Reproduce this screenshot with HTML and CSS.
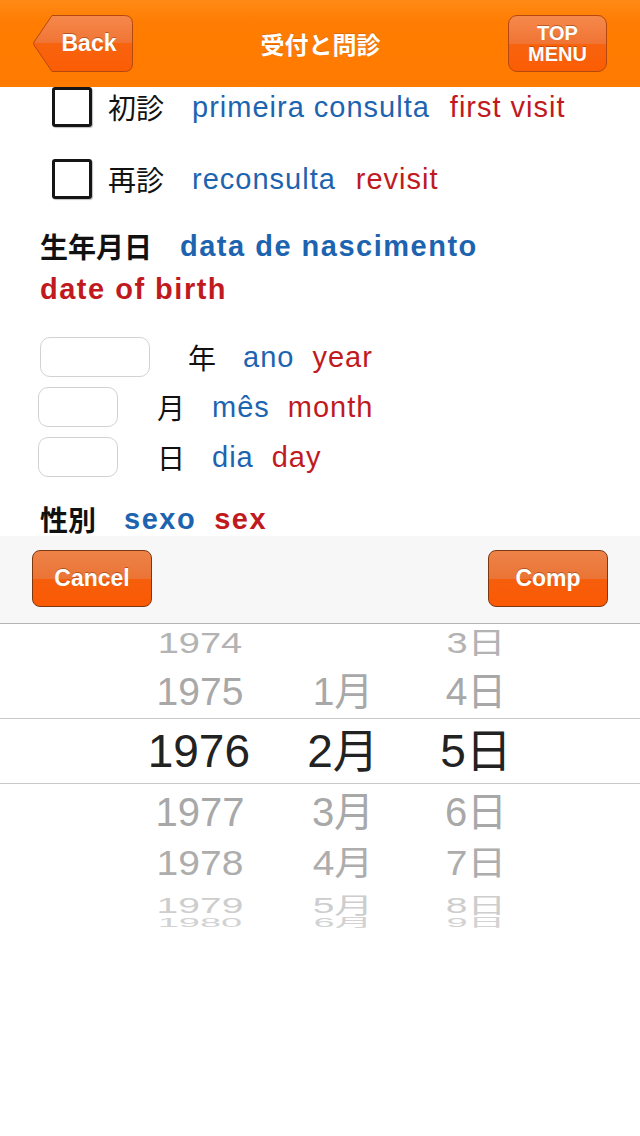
FILE: index.html
```html
<!Doctype html>
<html>
    <head>
        <title>受付と問診</title>
        <link rel="stylesheet" href="styles.css">
    </head>
    <body>
        <header class="topbar">
            <a class="back-btn">
                <svg class="back-shape" width="100" height="57" viewBox="0 0 100 57">
                    <defs>
                        <linearGradient id="gloss" x1="0" y1="0" x2="0" y2="1">
                            <stop offset="0" stop-color="#f5894c"/>
                            <stop offset="0.5" stop-color="#f07434"/>
                            <stop offset="0.5" stop-color="#f8630e"/>
                            <stop offset="1" stop-color="#fb5d04"/>
                        </linearGradient>
                    </defs>
                    <path d="M19 0.5 H91.5 Q99.5 0.5 99.5 8.5 V48.5 Q99.5 56.5 91.5 56.5 H19 L1 30 Q0 28.5 1 27 Z" fill="url(#gloss)" stroke="#b4480e" stroke-width="1"/>
                </svg>
                <span>Back</span>
            </a>
            <h1 class="title">受付と問診</h1>
            <a class="menu-btn">TOP<br>MENU</a>
        </header>

        <main class="form">
            <div class="check-row">
                <span class="box"></span>
                <span class="ja">初診</span>
                <span class="pt">primeira consulta</span>
                <span class="en">first visit</span>
            </div>
            <div class="check-row second">
                <span class="box"></span>
                <span class="ja">再診</span>
                <span class="pt">reconsulta</span>
                <span class="en">revisit</span>
            </div>

            <div class="heading">
                <span class="ja">生年月日</span>
                <span class="pt">data de nascimento</span>
            </div>
            <div class="heading sub">
                <span class="en">date of birth</span>
            </div>

            <div class="date-row year">
                <span class="field"></span>
                <span class="ja">年</span>
                <span class="pt">ano</span>
                <span class="en">year</span>
            </div>
            <div class="date-row">
                <span class="field"></span>
                <span class="ja">月</span>
                <span class="pt">mês</span>
                <span class="en">month</span>
            </div>
            <div class="date-row">
                <span class="field"></span>
                <span class="ja">日</span>
                <span class="pt">dia</span>
                <span class="en">day</span>
            </div>

            <div class="heading sex">
                <span class="ja">性別</span>
                <span class="pt">sexo</span>
                <span class="en">sex</span>
            </div>
        </main>

        <div class="toolbar">
            <a class="tool-btn">Cancel</a>
            <a class="tool-btn">Comp</a>
        </div>

        <div class="picker">
            <div class="wheel-row r-top"><span>1974</span><span></span><span>3日</span></div>
            <div class="wheel-row r-near"><span>1975</span><span>1月</span><span>4日</span></div>
            <div class="wheel-row r-sel"><span>1976</span><span>2月</span><span>5日</span></div>
            <div class="wheel-row r-below"><span>1977</span><span>3月</span><span>6日</span></div>
            <div class="wheel-row r-far"><span>1978</span><span>4月</span><span>7日</span></div>
            <div class="wheel-row r-farther"><span>1979</span><span>5月</span><span>8日</span></div>
            <div class="wheel-row r-edge"><span>1980</span><span>6月</span><span>9日</span></div>
        </div>
    </body>
</html>
```

FILE: styles.css
```css
body{
    margin:0;
    padding:0;
    background:#fff;
    font-family:"Liberation Sans", "Noto Sans CJK JP", sans-serif;
    color:#111;
}
a{
    text-decoration:none;
}

/* top bar */
.topbar{
    display:flex;
    align-items:center;
    justify-content:space-between;
    height:87px;
    padding:0 33px;
    background:linear-gradient(#ff8a16, #ff7d02 25%, #ff7a00);
    position:relative;
    z-index:2;
}
.back-btn{
    position:relative;
    width:100px;
    height:57px;
    display:flex;
    align-items:center;
    justify-content:center;
    padding-left:12px;
    box-sizing:border-box;
}
.back-shape{
    position:absolute;
    left:0;
    top:0;
}
.back-btn span{
    position:relative;
    color:#fff;
    font-weight:bold;
    font-size:23px;
    text-shadow:0 -1px 0 rgba(120,40,0,0.45);
}
.title{
    margin:0;
    color:#fff;
    font-size:24px;
    font-weight:bold;
    font-family:"Noto Sans CJK JP", sans-serif;
    text-shadow:0 -1px 0 rgba(150,60,0,0.3);
}
.menu-btn{
    width:99px;
    height:57px;
    box-sizing:border-box;
    display:flex;
    align-items:center;
    justify-content:center;
    text-align:center;
    color:#fff;
    font-weight:bold;
    font-size:20px;
    line-height:21px;
    border:1px solid #b4480e;
    border-radius:9px;
    background:linear-gradient(#f5894c, #f07434 50%, #f8630e 50%, #fb5d04);
    text-shadow:0 -1px 0 rgba(120,40,0,0.45);
}

/* form */
.form{
    height:449px;
    overflow:hidden;
    font-size:28px;
}
.ja{
    color:#111;
}
.pt{
    color:#1d64b0;
    font-size:29px;
    letter-spacing:1px;
}
.en{
    color:#c01a1f;
    font-size:29px;
    letter-spacing:1px;
}
.check-row{
    display:flex;
    align-items:center;
    height:40px;
    padding-left:52px;
}
.check-row.second{
    margin-top:32px;
}
.check-row .box{
    width:40px;
    height:40px;
    box-sizing:border-box;
    border:3px solid #151515;
    border-radius:3px;
    box-shadow:1px 1px 1px rgba(0,0,0,0.25);
}
.check-row .ja{
    margin-left:16px;
}
.check-row .pt{
    margin-left:28px;
}
.check-row .en{
    margin-left:20px;
}

.heading{
    display:flex;
    align-items:center;
    height:42px;
    margin-top:26px;
    padding-left:40px;
    font-weight:bold;
}
.heading .pt, .heading .en{
    letter-spacing:1.5px;
}
.heading .pt{
    margin-left:28px;
}
.heading.sub{
    margin-top:1px;
}
.heading.sex{
    height:38px;
    margin-top:23px;
}
.heading.sex .en{
    margin-left:18px;
}

.date-row{
    display:flex;
    align-items:center;
    height:40px;
    margin-bottom:10px;
    padding-left:38px;
}
.date-row.year{
    margin-top:27px;
    padding-left:40px;
}
.date-row .field{
    width:80px;
    height:40px;
    box-sizing:border-box;
    border:1px solid #d2d2d2;
    border-radius:10px;
    background:#fff;
}
.date-row.year .field{
    width:110px;
}
.date-row .ja{
    margin-left:39px;
}
.date-row.year .ja{
    margin-left:38px;
}
.date-row .pt{
    margin-left:27px;
}
.date-row .en{
    margin-left:18px;
}

/* picker toolbar */
.toolbar{
    display:flex;
    justify-content:space-between;
    align-items:flex-start;
    height:88px;
    padding:14px 32px 0;
    box-sizing:border-box;
    background:#f7f7f7;
    border-bottom:1px solid #b4b4b4;
}
.tool-btn{
    width:120px;
    height:57px;
    box-sizing:border-box;
    display:flex;
    align-items:center;
    justify-content:center;
    color:#fff;
    font-weight:bold;
    font-size:23px;
    border:1px solid #7d3812;
    border-radius:8px;
    background:linear-gradient(#ed8248, #eb7436 50%, #f65e0c 50%, #fb5a03);
    text-shadow:0 -1px 0 rgba(110,40,0,0.45);
}

/* date wheel */
.picker{
    display:flex;
    flex-direction:column;
}
.wheel-row{
    display:grid;
    grid-template-columns:140px 140px 120px;
    column-gap:3px;
    padding-left:130px;
    align-items:center;
    justify-items:center;
    font-size:39px;
    color:#a8a8a8;
}
.wheel-row span{
    display:inline-block;
    line-height:1;
}
.r-top{
    height:34px;
    color:#b3b3b3;
    font-size:38px;
}
.r-top span{
    transform:scaleY(0.78);
}
.r-near{
    height:54px;
    padding-top:6px;
}
.r-sel{
    height:66px;
    box-sizing:border-box;
    border-top:1px solid #c8c8c8;
    border-bottom:1px solid #c8c8c8;
    padding-left:0;
    grid-template-columns:270px 146px 120px;
    column-gap:0;
    font-size:46px;
    color:#222;
}
.r-sel span:first-child{
    justify-self:end;
    padding-right:20px;
}
.r-below{
    height:56px;
    font-size:40px;
}
.r-far{
    height:46px;
    color:#adadad;
}
.r-far span{
    transform:scaleY(0.88);
}
.r-farther{
    height:30px;
    color:#cdcdcd;
}
.r-farther span{
    transform:scaleY(0.55);
}
.r-edge{
    height:14px;
    color:#d2d2d2;
    font-size:38px;
}
.r-edge span{
    height:14px;
    line-height:14px;
    transform:scaleY(0.32);
}
```
